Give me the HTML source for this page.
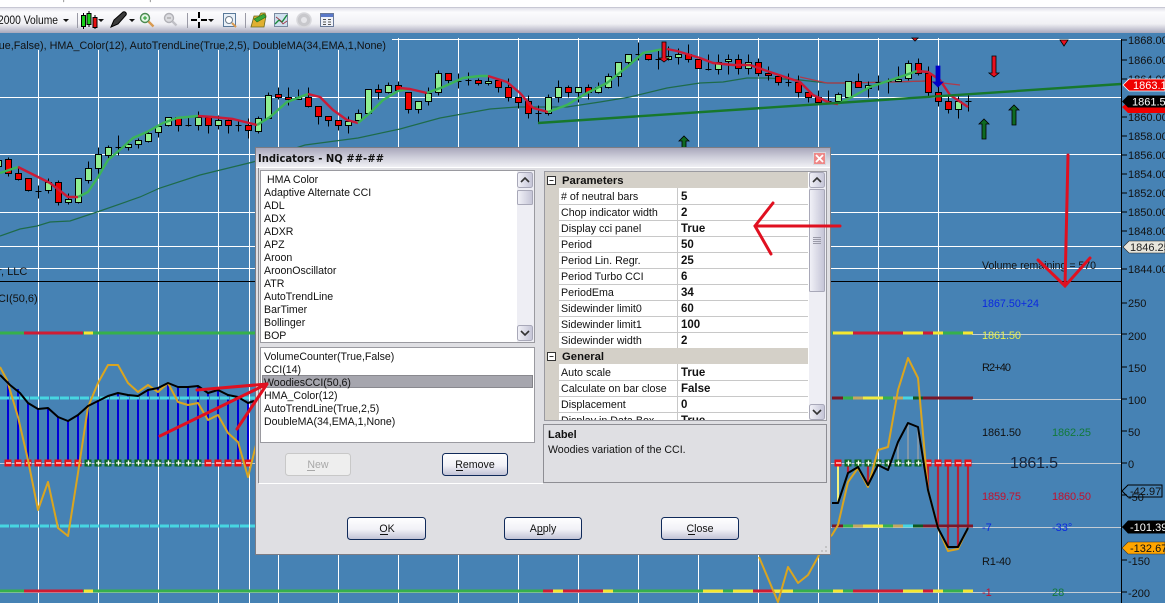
<!DOCTYPE html>
<html>
<head>
<meta charset="utf-8">
<title>Indicators</title>
<style>
html,body{margin:0;padding:0;background:#4682b4;width:1165px;height:603px;overflow:hidden}
svg{display:block;font-family:"Liberation Sans",sans-serif;filter:blur(.3px)}
text{white-space:pre}
</style>
</head>
<body>
<svg width="1165" height="603" viewBox="0 0 1165 603" xmlns="http://www.w3.org/2000/svg">
<defs>
<linearGradient id="tb" x1="0" y1="0" x2="0" y2="1"><stop offset="0" stop-color="#dcdce6"/><stop offset=".2" stop-color="#fbfbfd"/><stop offset=".65" stop-color="#f0f0f4"/><stop offset="1" stop-color="#a8a8bc"/></linearGradient>
<linearGradient id="ti" x1="0" y1="0" x2="0" y2="1"><stop offset="0" stop-color="#a9a8bb"/><stop offset=".5" stop-color="#cfcfdb"/><stop offset="1" stop-color="#f0f0f4"/></linearGradient>
<linearGradient id="bt" x1="0" y1="0" x2="0" y2="1"><stop offset="0" stop-color="#fff"/><stop offset=".55" stop-color="#f0f0f6"/><stop offset="1" stop-color="#bfc0d4"/></linearGradient>
<linearGradient id="sc" x1="0" y1="0" x2="1" y2="0"><stop offset="0" stop-color="#f2f2f8"/><stop offset="1" stop-color="#c4c4d6"/></linearGradient>
</defs>

<rect width="1165" height="603" fill="#4682b4"/>

<!-- grid -->
<path d="M38.5 38V603M98.5 38V603M158.5 38V603M218.5 38V603M249.5 38V603M278.5 38V603M338.5 38V603M398.5 38V603M458.5 38V603M518.5 38V603M578.5 38V603M638.5 38V603M698.5 38V603M758.5 38V603M818.5 38V603M878.5 38V603M938.5 38V603" stroke="#fff" stroke-width="1" fill="none"/>
<path d="M0 39.5H1121M0 97.5H1121M0 154.5H1121M0 212.5H1121M0 246.5H1121M0 268.5H1121" stroke="#fff" stroke-width="1" fill="none"/>
<rect x="0" y="33" width="392" height="17" fill="#4682b4"/>
<path d="M0 281.5H1121" stroke="#000" stroke-width="1"/>
<path d="M1121.5 39V603" stroke="#000" stroke-width="1"/>
<path d="M1121 40h6M1121 60h6M1121 79h6M1121 117h6M1121 136h6M1121 155h6M1121 174h6M1121 193h6M1121 212h6M1121 231h6M1121 269h6M1121 303h6M1121 334h6M1121 367h6M1121 399h6M1121 431h6M1121 463h6M1121 495h6M1121 527h6M1121 560h6M1121 592h6" stroke="#000" stroke-width="1"/>
<path d="M972 334.5H1121M972 399.5H1121M0 463.5H1121M828 527.5H1121M0 592.5H1121" stroke="#c4ccd4" stroke-width="1" fill="none"/>

<!-- double MA -->
<polyline fill="none" stroke="#1e6b4a" stroke-width="1.2" points="0,236 20,229 37,226 50,222 70,221 100,211 140,197 160,188 200,175 253,162 305,145 358,138 400,129 440,118 490,109 517,107 567,107 600,102 630,97 667,88 700,83 723,82 747,78 767,78 800,80 827,83 843,83 893,82 925,81"/>
<polyline fill="none" stroke="#b03a4a" stroke-width="1.2" points="800,77 827,83 843,83 893,82 925,81 960,85"/>

<!-- candles -->
<g transform="translate(.5 .5)" stroke="#000" stroke-width="1">
<path fill="none" d="M8 157V176M18 168V180M28 178V191M38 185V198M48 178V193M58 180V205M68 193V204M78 178V203M88 161V183M98 147V178M108 145V160M118 135V155M128 140V150M138 138V148M148 130V142M158 126V137M168 117V126M178 117V131M188 117V126M198 111V130M208 115V133M218 115V129M228 118V133M238 120V131M248 118V138M258 116V133M268 92V118M278 87V99M288 87V105M298 89V99M308 87V107M318 106V124M328 116V126M338 120V130M348 116V133M358 109V121M368 89V113M378 84V99M388 82V93M398 81V91M408 92V113M418 101V113M428 87V105M438 70V95M448 73V83M458 73V88M468 72V85M478 78V85M488 76V85M498 78V92M508 78V101M518 97V108M528 95V118M538 105V123M548 94V115M558 80V102M568 85V97M578 87V102M588 84V99M598 82V93M608 73V88M618 62V86M628 54V66M638 42V60M648 54V60M658 49V69M668 46V60M678 48V64M688 44V62M698 59V68M708 54V70M718 54V74M728 54V74M738 54V74M748 54V74M758 58V76M768 66V80M778 76V85M788 73V86M798 75V97M808 92V102M818 90V102M828 90V102M838 92V102M848 81V97M858 73V87M868 81V97M878 75V90M888 78V93M898 66V81M908 60V80M918 58V75M928 66V96M938 66V106M948 96V113M958 96V118M968 95V111"/>
<path fill="none" d="M35 191h6M115 147h6M185 125h6M235 125h6M455 81h6M465 80h6M535 113h6M635 54h6M655 59h6M705 69h6M785 82h6M825 101h6M875 82h6M885 81h6M965 101h6"/>
<path fill="#90ee90" d="M-5 160h6v6h-6zM45 182h6v8h-6zM65 199h6v3h-6zM75 178h6v24h-6zM85 168h6v12h-6zM95 154h6v14h-6zM105 147h6v8h-6zM125 144h6v3h-6zM135 140h6v4h-6zM145 133h6v8h-6zM155 126h6v6h-6zM165 117h6v8h-6zM195 117h6v8h-6zM215 120h6v5h-6zM255 118h6v13h-6zM265 95h6v23h-6zM295 97h6v2h-6zM345 121h6v4h-6zM355 113h6v7h-6zM365 89h6v24h-6zM385 85h6v7h-6zM415 101h6v8h-6zM425 93h6v8h-6zM435 73h6v19h-6zM485 81h6v2h-6zM545 97h6v16h-6zM555 87h6v10h-6zM575 87h6v5h-6zM595 87h6v5h-6zM605 76h6v11h-6zM615 62h6v14h-6zM625 54h6v8h-6zM665 56h6v3h-6zM675 54h6v3h-6zM715 62h6v7h-6zM725 59h6v2h-6zM745 62h6v6h-6zM835 94h6v7h-6zM845 81h6v16h-6zM865 85h6v3h-6zM895 79h6v2h-6zM905 63h6v15h-6zM955 101h6v8h-6z"/>
<path fill="#f00000" d="M5 159h6v14h-6zM15 173h6v6h-6zM25 178h6v12h-6zM55 182h6v20h-6zM175 117h6v8h-6zM205 117h6v8h-6zM225 120h6v5h-6zM245 125h6v5h-6zM275 94h6v3h-6zM285 97h6v2h-6zM305 97h6v9h-6zM315 106h6v10h-6zM325 116h6v4h-6zM335 120h6v5h-6zM375 89h6v3h-6zM395 85h6v5h-6zM405 92h6v17h-6zM445 73h6v7h-6zM475 80h6v3h-6zM495 80h6v7h-6zM505 87h6v10h-6zM515 97h6v5h-6zM525 101h6v12h-6zM565 87h6v5h-6zM585 87h6v5h-6zM645 54h6v5h-6zM685 54h6v5h-6zM695 59h6v9h-6zM735 59h6v9h-6zM755 62h6v11h-6zM765 73h6v2h-6zM775 76h6v6h-6zM795 82h6v10h-6zM805 92h6v5h-6zM815 97h6v5h-6zM855 81h6v6h-6zM915 63h6v10h-6zM925 73h6v19h-6zM935 92h6v9h-6zM945 101h6v8h-6z"/>
</g>

<!-- HMA -->
<g fill="none" stroke-width="2.4" stroke-linejoin="round">
<polyline stroke="#3cb558" points="0,173 18,167"/>
<polyline stroke="#cc1a36" points="18,167 50,183 68,197 78,197"/>
<polyline stroke="#3cb558" points="78,197 88,192 98,177 108,160 122,148 133,138 147,132 163,123 177,118 198,116"/>
<polyline stroke="#cc1a36" points="198,116 213,117 233,119 257,125"/>
<polyline stroke="#3cb558" points="257,125 270,117 287,102 308,94"/>
<polyline stroke="#cc1a36" points="308,94 320,97 333,110 347,120 358,123"/>
<polyline stroke="#3cb558" points="358,123 370,113 383,100 398,91 410,89"/>
<polyline stroke="#cc1a36" points="400,88 410,89 427,93"/>
<polyline stroke="#3cb558" points="427,93 443,87 463,78 480,76 488,76"/>
<polyline stroke="#cc1a36" points="488,76 507,82 520,93 533,108 548,112"/>
<polyline stroke="#3cb558" points="548,112 567,105 587,93 607,83 627,67 643,53 663,49"/>
<polyline stroke="#cc1a36" points="667,49 677,51 700,58 713,63 733,65 750,65 767,71 800,82 813,95 830,103 838,104"/>
<polyline stroke="#3cb558" points="838,104 850,98 870,87 897,78 917,71"/>
<polyline stroke="#cc1a36" points="917,71 928,72 940,80 950,95 968,107"/>
</g>

<!-- trend line -->
<line x1="538" y1="123" x2="1121" y2="84" stroke="#17782c" stroke-width="2.4"/>

<!-- signal arrows -->
<g stroke="#000" stroke-width=".8">
<path fill="#0f6a22" d="M982 139v-15h-3l5-5 5 5h-3v15zM1012 125v-15h-3l5-5 5 5h-3v15zM682 150v-9h-3l5-5 5 5h-3v9z"/>
<path fill="#e81020" d="M992 56v17h-3l5 4 5-4h-3V56zM662 42v16h-3l5 4 5-4h-3V42z"/>
<path fill="#e81020" d="M1060 40l4 6 4-6zM912 38l3 3 3-3z"/>
<path fill="#0000c8" stroke="#0000c8" d="M936 66v16h-3l5 5 5-5h-3V66z"/>
</g>

<!-- lower panel bars -->
<path d="M8 463V381M18 463V389M28 463V403M38 463V409M48 463V408M58 463V417M68 463V421M78 463V415M88 463V406M98 463V401M108 463V396M118 463V393M128 463V395M138 463V396M148 463V390M158 463V388M168 463V383M178 463V387M188 463V387M198 463V386M208 463V393M218 463V390M228 463V395M238 463V397M248 463V403" stroke="#0000d8" stroke-width="2" fill="none"/>
<path d="M848 463V473M868 463V485M928 463V490M938 463V528M948 463V547M958 463V547M968 463V528" stroke="#b82036" stroke-width="2.2" fill="none"/>
<path d="M838 463V503" stroke="#f4f480" stroke-width="2"/>
<path d="M878 463V465M888 463V470M898 463V442M908 463V423M918 463V427" stroke="#7e97ab" stroke-width="2" fill="none"/>

<!-- band lines -->
<g stroke-width="3" fill="none">
<path stroke="#36b04c" d="M0 333H256M0 591H973M832 333H973"/>
<path stroke="#cf1c34" d="M24 333H83M24 591H83"/>
<path stroke="#f5e830" d="M84 333H93M84 591H93"/>
<path stroke="#47d6e2" stroke-dasharray="9 1" d="M0 398H256M0 526H256"/>
<path stroke="#f5e830" d="M833 591H843M903 591H923M933 591H943M963 591H973"/>
<path stroke="#cf1c34" d="M853 591H903M923 591H933"/>
<path stroke="#f5e830" d="M833 333H853M903 333H923M933 333H943M963 333H973M553 591H563M603 591H613M703 591H723M733 591H753M773 591H793"/>
<path stroke="#cf1c34" d="M853 333H903M923 333H933M543 591H553M563 591H603M753 591H773"/>
<path stroke="#7a1628" d="M832 398H843M923 398H973M832 526H843M923 526H973"/>
<path stroke="#36b04c" d="M843 398H853M883 398H893M843 526H853M883 526H893"/>
<path stroke="#c2a860" d="M853 398H863M893 398H903M853 526H863M893 526H903"/>
<path stroke="#f0ea40" d="M863 398H883M863 526H883"/>
<path stroke="#47d6e2" d="M903 398H913M903 526H913"/>
<path stroke="#0d5a20" d="M913 398H923M913 526H923"/>
</g>

<!-- zero dots -->
<g fill="none">
<path stroke="#e81018" stroke-width="7" stroke-dasharray="7 3" d="M4.500 463H82M204.500 463H252M834.500 463H842M924.500 463H972"/>
<path stroke="#0f6a22" stroke-width="7" stroke-dasharray="7 3" d="M84.500 463H202M844.500 463H922"/>
<path stroke="#fff" stroke-width="1.300" stroke-dasharray="5 5" d="M6 463H81M206 463H251M836 463H841M926 463H971M86 463H201M846 463H921"/>
<path stroke="#fff" stroke-width="5" stroke-dasharray="1.300 8.700" d="M87.800 463H201M847.800 463H921"/>
</g>

<!-- oscillator lines -->
<polyline fill="none" stroke="#daa520" stroke-width="2" stroke-linejoin="round" points="0,367 7,380 18,417 28,460 38,510 48,482 58,528 68,536 78,473 88,407 98,383 108,365 118,365 128,383 138,392 148,385 158,392 168,383 178,402 188,405 198,403 208,420 218,415 228,433 238,442 248,477 256,445"/>
<polyline fill="none" stroke="#000" stroke-width="2" stroke-linejoin="round" points="0,375 10,385 20,393 28,403 38,409 48,408 58,417 68,421 78,415 88,406 98,401 108,396 118,393 128,395 138,396 148,390 158,388 168,383 178,387 188,387 198,386 208,393 218,390 228,395 238,397 248,403 254,401"/>
<polyline fill="none" stroke="#daa520" stroke-width="2" stroke-linejoin="round" points="759,557 778,602 788,567 798,583 808,575 818,557 826,540 832,535 838,525 848,482 858,468 868,487 878,450 888,447 898,390 908,358 918,378 928,490 938,528 948,551 958,549 968,528"/>
<polyline fill="none" stroke="#000" stroke-width="2" stroke-linejoin="round" points="832,503 838,503 848,473 858,467 868,485 878,465 888,470 898,442 908,423 918,427 928,490 938,528 948,547 958,547 968,528"/>

<!-- chart text -->
<g font-size="11" fill="#111">
<text x="-11" y="49" textLength="397" lengthAdjust="spacingAndGlyphs">True,False), HMA_Color(12), AutoTrendLine(True,2,5), DoubleMA(34,EMA,1,None)</text>
<text x="-2" y="275">r, LLC</text>
<text x="-10" y="302">CCI(50,6)</text>
<text x="982" y="269" textLength="114" lengthAdjust="spacingAndGlyphs">Volume remaining = 570</text>
<text x="982" y="307" fill="#0a28e0" textLength="57" lengthAdjust="spacingAndGlyphs">1867.50+24</text>
<text x="982" y="339" fill="#e8f050" textLength="39">1861.50</text>
<text x="982" y="371" textLength="29">R2+40</text>
<text x="982" y="436" textLength="39">1861.50</text>
<text x="1052" y="436" fill="#127a3a" textLength="39">1862.25</text>
<text x="1010" y="468" font-size="16" fill="#16233a" textLength="48">1861.5</text>
<text x="982" y="500" fill="#c4102c" textLength="39">1859.75</text>
<text x="1052" y="500" fill="#c4102c" textLength="39">1860.50</text>
<text x="982" y="531" fill="#0a28e0">-7</text>
<text x="1052" y="531" fill="#0a28e0">-33°</text>
<text x="982" y="565" textLength="29">R1-40</text>
<text x="982" y="596" fill="#c4102c">-1</text>
<text x="1052" y="596" fill="#127a3a">28</text>
</g>
<g font-size="11" fill="#111">
<text x="1128" y="44">1868.00</text><text x="1128" y="64">1866.00</text>
<text x="1128" y="83">1864.00</text>
<text x="1128" y="121">1860.00</text><text x="1128" y="140">1858.00</text><text x="1128" y="159">1856.00</text><text x="1128" y="178">1854.00</text><text x="1128" y="197">1852.00</text><text x="1128" y="216">1850.00</text><text x="1128" y="235">1848.00</text><text x="1128" y="273">1844.00</text>
<text x="1128" y="307">250</text><text x="1128" y="340">200</text><text x="1128" y="372">150</text><text x="1128" y="404">100</text><text x="1128" y="436">50</text><text x="1128" y="468">0</text><text x="1128" y="501">-50</text><text x="1128" y="565">-150</text><text x="1128" y="597">-200</text>
</g>

<!-- price flags -->
<path d="M1122 107l6-5h37v11h-37z" fill="#f00000"/>
<path d="M1123 85l6-6h36v12h-36z" fill="#f00000" stroke="#fff" stroke-width=".8"/>
<path d="M1122 101.500l6-6h37v12h-37z" fill="#000"/>
<path d="M1123 247l6-6h36v12h-36z" fill="#e8e6dc" stroke="#222" stroke-width=".6"/>
<path d="M1122 491l6-6h34v12h-34z" fill="none" stroke="#000" stroke-width="1"/>
<path d="M1122 527l6-6.500h37v13h-37z" fill="#000"/>
<path d="M1122 548l6-6h37v12h-37z" fill="#ffa500" stroke="#333" stroke-width=".6"/>
<g font-size="11">
<text x="1133" y="89" fill="#fff">1863.19</text>
<text x="1132" y="105.500" fill="#fff">1861.50</text>
<text x="1130" y="251" fill="#222">1846.25</text>
<text x="1130" y="495" fill="#111">-42.97</text>
<text x="1130" y="531" fill="#fff">-101.39</text>
<text x="1130" y="552" fill="#111">-132.67</text>
</g>

<!-- toolbar -->
<rect x="0" y="0" width="1165" height="8" fill="#fff"/>
<path d="M64 0q-1 1 0 2M150 0q1 1 0 2" stroke="#999" fill="none"/>
<rect x="0" y="7" width="1165" height="26" fill="url(#tb)"/>
<path d="M0 7.500H1165" stroke="#c8c8d4"/>
<text x="-2" y="24" font-size="11.500" fill="#111" textLength="60" lengthAdjust="spacingAndGlyphs">2000 Volume</text>
<path d="M63 19h6l-3 3zM98 19h6l-3 3zM129 19h6l-3 3zM208 19h6l-3 3z" fill="#111"/>
<path d="M77.500 13V28M187.500 13V28M245.500 13V28" stroke="#9a9aa6"/>
<g stroke="#000" stroke-width="1">
<path d="M83.500 13V29M89 11V27M95 15V29"/>
<rect x="81.500" y="15.500" width="4" height="11" fill="#19d019"/><rect x="87" y="13.500" width="4" height="11" fill="#19d019"/><rect x="93" y="17.500" width="4" height="10" fill="#e81010"/>
</g>
<path d="M111 27l3-7 9-8c2-1 4 1 3 3l-8 9z" fill="#3a3a3a" stroke="#000"/>
<circle cx="145" cy="18" r="4.500" fill="#e4f6e4" stroke="#4a8a50" stroke-width="1.400"/><path d="M143 18h4M145 16v4" stroke="#1f9a2a"/><path d="M148.500 21.500l5 5" stroke="#d89a50" stroke-width="2.400"/>
<circle cx="169" cy="18" r="4.500" fill="#dcdce0" stroke="#b0b0b6" stroke-width="1.400"/><path d="M167 18h4" stroke="#999"/><path d="M172.500 21.500l4 4" stroke="#c0c0c6" stroke-width="2.400"/>
<path d="M191 20h6M201 20h6M199 12v6M199 22v6" stroke="#000" stroke-width="2"/>
<rect x="223.500" y="13.500" width="12" height="13" fill="#e8f0f8" stroke="#5a7a9a"/><circle cx="229" cy="20" r="3.500" fill="#fff" stroke="#6a7a8a"/><path d="M232 23l4 4" stroke="#d89a50" stroke-width="2"/>
<path d="M251 27l3-11h5l2-3h4l1 3 -2 11z" fill="#e0b030" stroke="#6a6a20" stroke-width=".8"/><path d="M254 19l10-5 2 3-9 5z" fill="#38a838" stroke="#206a20" stroke-width=".6"/>
<rect x="274.500" y="13.500" width="13" height="13" fill="#cfe0ee" stroke="#7a8aa0"/><path d="M275 24l4-4 3 2 5-7" stroke="#1a8a3a" stroke-width="1.400" fill="none"/><path d="M276 17l4 3 3 4 4-3" stroke="#9a3040" stroke-width=".8" fill="none"/>
<circle cx="304" cy="20" r="7" fill="#c8c8cc" stroke="#d8d8dc" stroke-width="1.500"/><circle cx="304" cy="20" r="3" fill="#e6e6ea"/>
<rect x="320.500" y="13.500" width="13" height="13" fill="#f0f2f8" stroke="#6a7a9a"/><rect x="321" y="14" width="12" height="3" fill="#5a78c8"/><path d="M323 19.500h3M323 22h3M323 24.500h3M328 19.500h3M328 22h3M328 24.500h3" stroke="#555"/>

<!-- dialog -->
<rect x="255" y="147" width="576" height="408" fill="#7c7c84"/>
<rect x="256" y="148" width="574" height="406" fill="#dfdfe3"/>
<rect x="256" y="148" width="574" height="19" fill="url(#ti)"/>
<path d="M256 167.500H830" stroke="#fff"/>
<text x="258" y="162" font-size="11" font-weight="bold" fill="#111" font-family="DejaVu Sans, sans-serif" textLength="126" lengthAdjust="spacingAndGlyphs">Indicators - NQ ##-##</text>
<rect x="813.500" y="152.500" width="12" height="12" fill="#ee8888" stroke="#d8d8de"/>
<path d="M816 155l7 7M823 155l-7 7" stroke="#fff" stroke-width="1.800"/>
<rect x="258" y="168" width="1" height="315" fill="#8a8a90"/>

<!-- list 1 -->
<rect x="260.500" y="170.500" width="274" height="172" fill="#fff" stroke="#9a9aa0"/>
<g font-size="10.600" fill="#111">
<text x="267" y="183">HMA Color</text>
<text x="264" y="196">Adaptive Alternate CCI</text>
<text x="264" y="209">ADL</text>
<text x="264" y="222">ADX</text>
<text x="264" y="235">ADXR</text>
<text x="264" y="248">APZ</text>
<text x="264" y="261">Aroon</text>
<text x="264" y="274">AroonOscillator</text>
<text x="264" y="287">ATR</text>
<text x="264" y="300">AutoTrendLine</text>
<text x="264" y="313">BarTimer</text>
<text x="264" y="326">Bollinger</text>
<text x="264" y="339">BOP</text>
</g>
<rect x="517" y="171" width="17" height="171" fill="#eeeef4"/>
<rect x="517.500" y="172.500" width="15" height="15" rx="2" fill="url(#sc)" stroke="#a8a8b8"/>
<path d="M521 182l4-4 4 4" fill="none" stroke="#333" stroke-width="1.600"/>
<rect x="517.500" y="190.500" width="15" height="14" rx="1" fill="url(#sc)" stroke="#a8a8b8"/>
<rect x="517.500" y="325.500" width="15" height="15" rx="2" fill="url(#sc)" stroke="#a8a8b8"/>
<path d="M521 331l4 4 4-4" fill="none" stroke="#333" stroke-width="1.600"/>

<!-- list 2 -->
<rect x="260.500" y="347.500" width="274" height="95" fill="#fff" stroke="#9a9aa0"/>
<rect x="262" y="375" width="271" height="13" fill="#a6a6ae"/>
<rect x="262.500" y="375.500" width="270" height="12" fill="none" stroke="#333" stroke-width=".6" stroke-dasharray="1 1"/>
<g font-size="10.600" fill="#111">
<text x="264" y="360">VolumeCounter(True,False)</text>
<text x="264" y="373">CCI(14)</text>
<text x="264" y="386">WoodiesCCI(50,6)</text>
<text x="264" y="399">HMA_Color(12)</text>
<text x="264" y="412">AutoTrendLine(True,2,5)</text>
<text x="264" y="425">DoubleMA(34,EMA,1,None)</text>
</g>

<!-- property grid -->
<rect x="544.500" y="171.500" width="282" height="249" fill="#fff" stroke="#9a9aa0"/>
<rect x="545" y="172" width="14" height="248" fill="#d4d0c8"/>
<rect x="545" y="172" width="263" height="16" fill="#d4d0c8"/>
<rect x="545" y="348" width="263" height="16" fill="#d4d0c8"/>
<path d="M559 204.500H808M559 220.500H808M559 236.500H808M559 252.500H808M559 268.500H808M559 284.500H808M559 300.500H808M559 316.500H808M559 332.500H808M559 380.500H808M559 396.500H808M559 412.500H808M677.500 188V348M677.500 364V420" stroke="#c8c8c8"/>
<g fill="none" stroke="#333"><rect x="547.500" y="176.500" width="8" height="8" fill="#fff"/><path d="M549.500 180.500h4"/><rect x="547.500" y="352.500" width="8" height="8" fill="#fff"/><path d="M549.500 356.500h4"/></g>
<g font-size="10.700" fill="#111">
<text x="562" y="184" font-weight="bold" font-size="11.300">Parameters</text>
<text x="561" y="200"># of neutral bars</text>
<text x="561" y="216">Chop indicator width</text>
<text x="561" y="232">Display cci panel</text>
<text x="561" y="248">Period</text>
<text x="561" y="264">Period Lin. Regr.</text>
<text x="561" y="280">Period Turbo CCI</text>
<text x="561" y="296">PeriodEma</text>
<text x="561" y="312">Sidewinder limit0</text>
<text x="561" y="328">Sidewinder limit1</text>
<text x="561" y="344">Sidewinder width</text>
<text x="562" y="360" font-weight="bold" font-size="11.300">General</text>
<text x="561" y="376">Auto scale</text>
<text x="561" y="392">Calculate on bar close</text>
<text x="561" y="408">Displacement</text>
<text x="561" y="424">Display in Data Box</text>
</g>
<g font-size="11.500" fill="#111" font-weight="bold">
<text x="681" y="200">5</text><text x="681" y="216">2</text><text x="681" y="232">True</text><text x="681" y="248">50</text><text x="681" y="264">25</text><text x="681" y="280">6</text><text x="681" y="296">34</text><text x="681" y="312">60</text><text x="681" y="328">100</text><text x="681" y="344">2</text>
<text x="681" y="376">True</text><text x="681" y="392">False</text><text x="681" y="408">0</text><text x="681" y="424">True</text>
</g>
<rect x="809" y="172" width="17" height="248" fill="#eeeef4"/>
<rect x="809.500" y="172.500" width="15" height="15" rx="2" fill="url(#sc)" stroke="#a8a8b8"/>
<path d="M813 182l4-4 4 4" fill="none" stroke="#333" stroke-width="1.600"/>
<rect x="809.500" y="189.500" width="15" height="102" rx="1" fill="url(#sc)" stroke="#a8a8b8"/>
<path d="M813 237.500h8M813 239.500h8M813 241.500h8M813 243.500h8" stroke="#9a9aa8"/>
<rect x="809.500" y="404.500" width="15" height="15" rx="2" fill="url(#sc)" stroke="#a8a8b8"/>
<path d="M813 410l4 4 4-4" fill="none" stroke="#333" stroke-width="1.600"/>

<!-- label box -->
<rect x="544" y="420" width="284" height="5" fill="#dfdfe3"/>
<path d="M544 420.500H827" stroke="#9a9aa0"/>
<rect x="543.500" y="424.500" width="283" height="58" fill="#dfdfe3" stroke="#8e8e94"/>
<text x="548" y="438" font-size="11" font-weight="bold" fill="#111">Label</text>
<text x="548" y="453" font-size="10.600" fill="#111">Woodies variation of the CCI.</text>
<path d="M259 483.500H543" stroke="#fff"/>
<path d="M821 551h2M825 551h2M825 547h2" stroke="#aaa"/>

<!-- buttons -->
<rect x="285.500" y="453.500" width="65" height="22" rx="3" fill="#eeeeee" stroke="#c8c8c8"/>
<text x="318" y="468" font-size="10.600" fill="#a8a8a8" text-anchor="middle">New</text>
<rect x="442.500" y="453.500" width="65" height="22" rx="3" fill="url(#bt)" stroke="#102a5a"/>
<text x="475" y="468" font-size="10.600" fill="#111" text-anchor="middle">Remove</text>
<rect x="347.500" y="517.500" width="78" height="22" rx="3" fill="url(#bt)" stroke="#102a5a"/>
<text x="387" y="532" font-size="10.600" fill="#111" text-anchor="middle">OK</text>
<rect x="504.500" y="517.500" width="77" height="22" rx="3" fill="url(#bt)" stroke="#102a5a"/>
<text x="543" y="532" font-size="10.600" fill="#111" text-anchor="middle">Apply</text>
<rect x="661.500" y="517.500" width="77" height="22" rx="3" fill="url(#bt)" stroke="#102a5a"/>
<text x="700" y="532" font-size="10.600" fill="#111" text-anchor="middle">Close</text>
<path d="M456 470.500h7M380 534.500h8M537 534.500h6M688 534.500h7" stroke="#111"/>
<path d="M307 470.500h8" stroke="#a8a8a8"/>

<!-- red annotations -->
<g stroke="#e01020" fill="none" stroke-linecap="round">
<path stroke-width="3" d="M840 226H755M773 203L755 226L771 254"/>
<path stroke-width="3" d="M1068 155L1067 200L1065 286M1038 260L1065 286L1090 258"/>
<path stroke-width="3" d="M160 436L267 384M197 390L267 384M237 429L267 384"/>
</g>
</svg>
</body>
</html>
